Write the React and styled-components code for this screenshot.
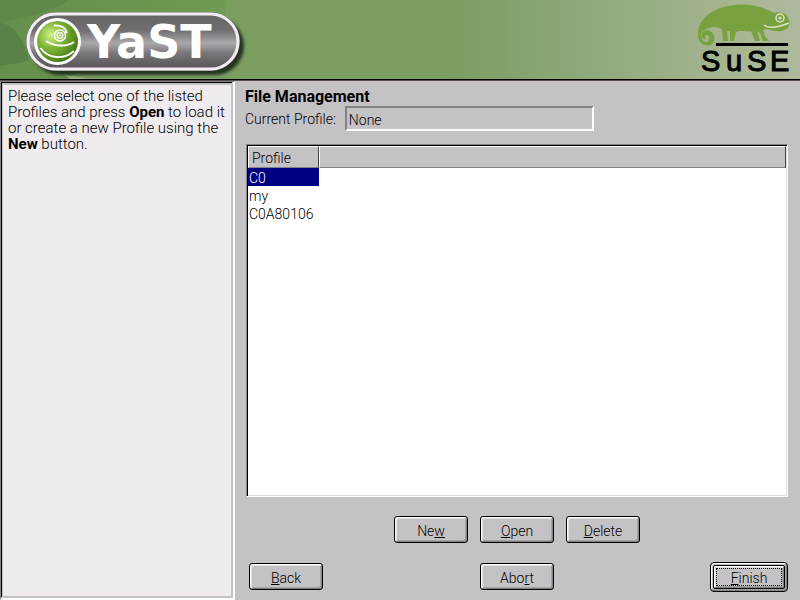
import React, { useState } from "react";
import styled, { createGlobalStyle, css } from "styled-components";

const GlobalStyle = createGlobalStyle`
  * { box-sizing: border-box; }
  body { margin: 0; background: #c5c2c5; }
  body, button, input, table { font-family: Roboto, "Liberation Sans", sans-serif; font-size: 14px; font-weight: 300; color: #000; }
  b, h1 { font-weight: 700; }
`;

const Page = styled.div`
  min-height: 100vh;
  display: flex;
  flex-direction: column;
`;

const Banner = styled.header`
  display: flex;
  justify-content: space-between;
  height: 81px;
  border-bottom: 1px solid #5a4d52;
  box-shadow: inset 0 -1px #000;
  background: linear-gradient(90deg, #7a9d60 0%, #7a9d60 56%, #86a470 66%, #9cb088 84%, #a6b590 91%, #aeb99c 100%);
  svg { display: block; height: 79px; }
`;

const Body = styled.div`
  flex: 1;
  display: flex;
`;

const HelpPanel = styled.aside`
  flex: 0 0 235px;
  display: flex;
  border: 1px solid;
  border-color: #84828a #fff #fff #84828a;
  box-shadow: inset -1px -1px #fff;
`;

const HelpText = styled.p`
  flex: 1;
  margin: 1px;
  padding: 3px 0 0 5px;
  font-size: 15px;
  line-height: 16px;
  background: #efebef;
  border: solid #c5c2c5;
  border-width: 2px 2px 2px 1px;
  box-shadow: -1px -1px #000;
`;

const Main = styled.main`
  flex: 1;
  min-width: 0;
  display: flex;
  flex-direction: column;
  padding: 7px 12px 7px 10px;
`;

const Title = styled.h1`
  margin: 0;
  font-size: 16px;
  line-height: 18px;
`;

const Field = styled.div`
  display: flex;
  align-items: center;
  gap: 9px;
`;

const ProfileInput = styled.input`
  width: 249px;
  height: 25px;
  padding: 2px 2px 0;
  background: #c5c2c5;
  border: 2px solid;
  border-color: #848284 #fff #fff #848284;
  border-radius: 0;
  outline: none;
`;

const Stack = styled.div`
  flex: 1;
  display: flex;
  flex-direction: column;
  padding: 13px 0 0 1px;
`;

const ListBox = styled.div`
  flex: 1;
  background: #fff;
  border: 1px solid;
  border-color: #848284 #fff #fff #848284;
  box-shadow: inset 1px 1px #000, inset -1px -1px #dedfde;
  padding: 1px;
`;

const ProfileTable = styled.table`
  width: 100%;
  border-collapse: separate;
  border-spacing: 0;
`;

const HeadCell = styled.th`
  width: ${(p) => (p.$fill ? "auto" : "71px")};
  height: 22px;
  padding: 2px 3px 0;
  text-align: left;
  font-weight: 300;
  background: #c5c2c5;
  border: 1px solid;
  border-color: #fff #424142 #848284 #fff;
`;

const Cell = styled.td`
  height: 18px;
  padding: 2px 1px 0;
  line-height: 16px;
  ${(p) => p.$selected && css`
    background: #000084;
    color: #fff;
  `}
`;

const Actions = styled.div`
  display: flex;
  justify-content: center;
  gap: 6px;
  padding: 16px 0 14px;
`;

const Navigation = styled.nav`
  display: grid;
  grid-template-columns: 1fr auto 1fr;
  align-items: center;
  & > :last-child { justify-self: end; }
`;

const Button = styled.button`
  width: 74px;
  height: 27px;
  margin: 3px;
  padding: 2px 0 0;
  background: #c5c2c5;
  border: 1px solid #000;
  border-radius: 3px;
  box-shadow: inset 1px 1px #fff, inset -1px -1px #848284, inset 2px 2px #dedfde, inset -2px -2px #a5a2a5;
`;

const DefaultFrame = styled.span`
  display: block;
  padding: 2px;
  background: #c5c2c5;
  border: 1px solid #000;
  border-radius: 4px;
  box-shadow: inset 1px 1px #fff, inset -1px -1px #848284, inset -2px -2px #a5a2a5;
`;

const DefaultButton = styled(Button)`
  display: block;
  width: 72px;
  height: 24px;
  margin: 0;
  padding: 2px 0 0;
  border-radius: 2px;
  outline: 1px dotted #000;
  outline-offset: -4px;
`;

function YastLogo() {
  return (
    <svg width="260" height="79" viewBox="0 0 260 79" role="img" aria-label="YaST">
      <defs>
        <linearGradient id="leaf" x1="0" x2="1" y2="0.4">
          <stop offset="0" stopColor="#638c4b" />
          <stop offset="1" stopColor="#709e52" />
        </linearGradient>
        <linearGradient id="metal" x2="0" y2="1">
          <stop offset="0" stopColor="#656365" />
          <stop offset="0.3" stopColor="#716f71" />
          <stop offset="0.53" stopColor="#aaa8aa" />
          <stop offset="0.72" stopColor="#777577" />
          <stop offset="1" stopColor="#555355" />
        </linearGradient>
        <radialGradient id="ball" cx="0.34" cy="0.34" r="0.7">
          <stop offset="0" stopColor="#d4f38b" />
          <stop offset="0.45" stopColor="#82b63a" />
          <stop offset="1" stopColor="#457b16" />
        </radialGradient>
        <filter id="shade" x="-10%" y="-20%" width="120%" height="150%">
          <feGaussianBlur stdDeviation="1.5" />
        </filter>
      </defs>
      <path d="M0 0H225C230 10 223 24 203 31C175 43 120 50 65 79H0Z" fill="url(#leaf)" />
      <path d="M0 0H68C58 10 35 14 0 23Z" fill="#5f8849" />
      <path d="M0 23C18 25 24 44 30 61L0 66Z" fill="#5a8146" />
      <path d="M0 66Q34 60 66 69L76 79H0Z" fill="#668f4c" />
      <path d="M65 75Q76 76 90 79H70Z" fill="#9bad87" />
      <rect x="31" y="17" width="213" height="58" rx="29" fill="#172312" opacity="0.85" filter="url(#shade)" />
      <rect x="26" y="12" width="214" height="59" rx="29.5" fill="#777078" />
      <rect x="28" y="14" width="210" height="55" rx="27.5" fill="url(#metal)" stroke="#f4edf3" strokeWidth="3" />
      <circle cx="57.500" cy="41.500" r="23.500" fill="#fff" />
      <circle cx="57.500" cy="41.500" r="20.500" fill="url(#ball)" />
      <g fill="none" stroke="#fff">
        <circle cx="60" cy="35.500" r="5.500" strokeWidth="1.500" />
        <circle cx="60" cy="35.500" r="2.800" strokeWidth="1.300" />
        <path d="M46 41Q52 45 60 45.500T74 42" strokeWidth="2" />
        <path d="M54 25.500Q65 25 67 33" strokeWidth="1.800" />
        <path d="M40.500 48C48 59 64 60 74 51" strokeWidth="1.800" />
      </g>
      <circle cx="60" cy="35.500" r="1" fill="#fff" />
      <text x="87" y="58" fill="#fff" fontFamily="DejaVu Sans" fontWeight="700" fontSize="46">YaST</text>
    </svg>
  );
}

function SuseLogo() {
  return (
    <svg width="120" height="79" viewBox="680 0 120 79" role="img" aria-label="SuSE">
      <path
        fill="#78a23f"
        d="M711 45C703 47 697 42 698 32C699 20 711 9 728 6C745 2 762 6 774 13C779 11 787 13 788 18L790 23C789 29 782 32 777 31C771 31 768 28 763 30L765 36L769 41H763L760 33L757 31L760 41H755L751 31C744 32 741 30 736 32L734 41H730V31H727L728 41H723L722 29C716 25 706 27 701 33C701 40 704 43 707 42C710 40 710 36 707 35C705 35 704 38 706 39C702 40 701 36 702 33C705 28 713 30 714 36C715 41 713 44 711 45Z"
      />
      <g fill="none" stroke="#dce4c9">
        <circle cx="780" cy="18" r="4" strokeWidth="1.500" />
        <path d="M764 25C770 30 781 26 789 23" strokeWidth="1.500" />
      </g>
      <circle cx="780" cy="18" r="1.500" fill="#dce4c9" />
      <path d="M716 44.500H788" stroke="#000" strokeWidth="3" />
      <text x="701 726 747 770" y="71" fontFamily="Liberation Sans" fontSize="29" stroke="#000" strokeWidth="1">SuSE</text>
    </svg>
  );
}

const profiles = ["C0", "my", "C0A80106"];

export default function App() {
  const [selected, setSelected] = useState("C0");
  return (
    <Page>
      <GlobalStyle />
      <Banner>
        <YastLogo />
        <SuseLogo />
      </Banner>
      <Body>
        <HelpPanel>
          <HelpText>
            Please select one of the listed Profiles and press <b>Open</b> to load it or create a new Profile using the <b>New</b> button.
          </HelpText>
        </HelpPanel>
        <Main>
          <Title>File Management</Title>
          <Field>
            <label htmlFor="current">Current Profile:</label>
            <ProfileInput id="current" value="None" readOnly />
          </Field>
          <Stack>
            <ListBox>
              <ProfileTable>
                <thead>
                  <tr>
                    <HeadCell scope="col">Profile</HeadCell>
                    <HeadCell $fill />
                  </tr>
                </thead>
                <tbody>
                  {profiles.map((name) => (
                    <tr key={name} onClick={() => setSelected(name)}>
                      <Cell $selected={name === selected}>{name}</Cell>
                    </tr>
                  ))}
                </tbody>
              </ProfileTable>
            </ListBox>
            <Actions>
              <Button>Ne<u>w</u></Button>
              <Button><u>O</u>pen</Button>
              <Button><u>D</u>elete</Button>
            </Actions>
            <Navigation>
              <Button><u>B</u>ack</Button>
              <Button>Abo<u>r</u>t</Button>
              <DefaultFrame>
                <DefaultButton><u>F</u>inish</DefaultButton>
              </DefaultFrame>
            </Navigation>
          </Stack>
        </Main>
      </Body>
    </Page>
  );
}
